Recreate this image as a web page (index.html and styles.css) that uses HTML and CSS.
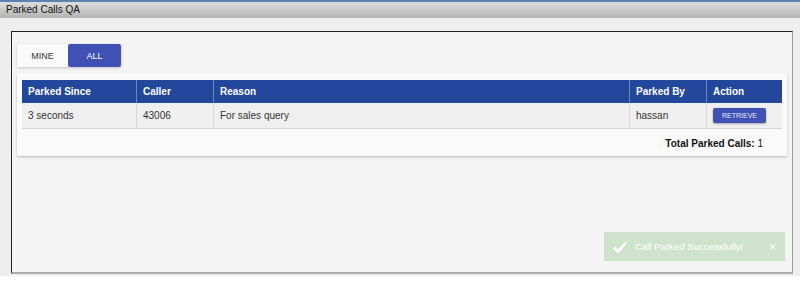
FILE: index.html
```html
<!DOCTYPE html>
<html lang="en">
<head>
    <meta charset="UTF-8">
    <title>Parked Calls QA</title>
    <link rel="stylesheet" href="styles.css">
</head>
<body>
    <div class="window">
        <div class="titlebar">Parked Calls QA</div>

        <div class="content">
            <div class="panel">
                <div class="toggle">
                    <button class="toggle-btn">MINE</button>
                    <button class="toggle-btn active">ALL</button>
                </div>

                <div class="card">
                    <table class="calls">
                        <thead>
                            <tr>
                                <th class="col-since">Parked Since</th>
                                <th class="col-caller">Caller</th>
                                <th>Reason</th>
                                <th class="col-by">Parked By</th>
                                <th class="col-action">Action</th>
                            </tr>
                        </thead>
                        <tbody>
                            <tr>
                                <td>3 seconds</td>
                                <td>43006</td>
                                <td>For sales query</td>
                                <td>hassan</td>
                                <td><button class="retrieve">RETRIEVE</button></td>
                            </tr>
                        </tbody>
                    </table>
                    <div class="total"><b>Total Parked Calls:</b> 1</div>
                </div>
            </div>
        </div>
    </div>

    <div class="toast">
        <svg class="toast-icon" width="14" height="12" viewBox="0 0 14 12">
            <path d="M1 6.5 L5 10.5 L13 1.5" fill="none" stroke="#fff" stroke-width="2.6"/>
        </svg>
        <span class="toast-text">Call Parked Successfully!</span>
        <span class="toast-close">&times;</span>
    </div>
</body>
</html>
```

FILE: styles.css
```css
body {
    margin: 0;
    background: #fff;
    font-family: 'Liberation Sans', Arial, sans-serif;
    color: #333;
}

.window {
    height: 276px;
    background: #eeeeee;
}

.titlebar {
    height: 16px;
    border-top: 2px solid #5a82b4;
    background: linear-gradient(#dedede, #b3b3b3);
    font-size: 10px;
    line-height: 16px;
    padding-left: 6px;
    color: #111;
}

.content {
    padding: 13px 7px 0 11px;
}

.panel {
    height: 228px;
    background: #f4f4f4;
    border-left: 1px solid #222;
    border-top: 1px solid #222;
    border-right: 1px solid #999;
    border-bottom: 2px solid #aaa;
    padding: 12px 5px 0 5px;
}

.toggle {
    display: inline-flex;
    box-shadow: 0 1px 3px rgba(0, 0, 0, 0.2);
    border-radius: 2px;
}

.toggle-btn {
    border: 0;
    margin: 0;
    height: 23px;
    width: 51px;
    background: #fafafa;
    font-family: inherit;
    font-size: 9px;
    color: #333;
    padding: 0;
}

.toggle-btn.active {
    width: 53px;
    background: #3f51b5;
    color: #fff;
    border-radius: 2px;
}

.card {
    margin-top: 6px;
    height: 76px;
    background: #fafafa;
    box-shadow: 0 1px 2px rgba(0, 0, 0, 0.25);
    padding: 7px 5px 0 5px;
}

.calls {
    width: 100%;
    border-collapse: collapse;
    font-size: 10px;
}

.calls th {
    background: #22479b;
    color: #fff;
    text-align: left;
    height: 23px;
    padding: 0 6px;
    border-right: 1px solid #6d86bf;
}

.calls th:last-child,
.calls td:last-child {
    border-right: 0;
}

.calls td {
    background: #efefef;
    height: 25px;
    padding: 0 6px;
    border-right: 1px solid #d8d8d8;
    border-bottom: 1px solid #d5d5d5;
}

.col-since { width: 102px; }
.col-caller { width: 64px; }
.col-by { width: 64px; }
.col-action { width: 63px; }

.retrieve {
    border: 0;
    background: #3f51b5;
    color: #e8eaf6;
    font-family: inherit;
    font-size: 7px;
    width: 53px;
    height: 15px;
    padding: 0;
    border-radius: 2px;
    box-shadow: 0 1px 2px rgba(0, 0, 0, 0.3);
}

.total {
    text-align: right;
    font-size: 10px;
    color: #111;
    padding: 9px 19px 0 0;
}

.toast {
    position: absolute;
    left: 604px;
    top: 232px;
    width: 181px;
    height: 29px;
    background: #cfe3cc;
    display: flex;
    align-items: center;
    box-sizing: border-box;
    padding: 0 9px;
}

.toast-icon {
    margin-right: 8px;
}

.toast-text {
    flex: 1;
    color: #fff;
    font-size: 9.6px;
}

.toast-close {
    color: #eef5ec;
    font-size: 12px;
    font-weight: bold;
}
```
